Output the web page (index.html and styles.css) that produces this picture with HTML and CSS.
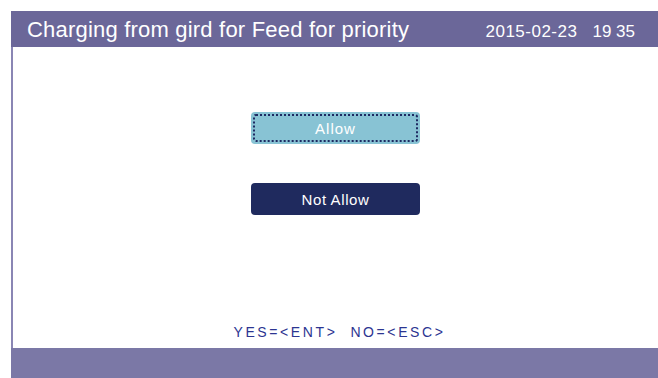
FILE: index.html
```html
<!DOCTYPE html>
<html>
<head>
<meta charset="utf-8">
<link rel="stylesheet" href="styles.css">
</head>
<body>
<div class="screen">
  <header class="header">
    <span class="title">Charging from gird for Feed for priority</span>
    <span class="clock"><span class="date">2015-02-23</span><span class="time">19 35</span></span>
  </header>
  <main class="content">
    <div class="options">
      <div class="btn btn-selected"><span>Allow</span></div>
      <div class="btn btn-dark"><span>Not Allow</span></div>
    </div>
    <div class="hint">YES=&lt;ENT&gt;&nbsp;&nbsp;NO=&lt;ESC&gt;</div>
  </main>
  <footer class="footer"></footer>
</div>
</body>
</html>
```
FILE: styles.css
```css
html, body {
  margin: 0;
  padding: 0;
  background: #ffffff;
  width: 658px;
  height: 378px;
  overflow: hidden;
}
body {
  padding: 11px 0 0 11px;
  box-sizing: border-box;
  font-family: "Liberation Sans", Arial, sans-serif;
}
.screen {
  width: 647px;
  height: 367px;
  display: flex;
  flex-direction: column;
}
.header {
  height: 36px;
  background: #6b6799;
  color: #ffffff;
  display: flex;
  align-items: center;
  padding: 0 0 0 16px;
  flex: none;
}
.title {
  font-size: 22px;
  letter-spacing: 0.2px;
  flex: 1;
  padding-top: 1px;
}
.clock {
  font-size: 17px;
  margin-right: 23px;
  padding-top: 6px;
}
.date {
  letter-spacing: 0.5px;
  margin-right: 15px;
}
.content {
  flex: 1;
  border-left: 2px solid #8a86b4;
  display: flex;
  flex-direction: column;
  align-items: center;
}
.options {
  margin-top: 65px;
  display: flex;
  flex-direction: column;
  gap: 39px;
}
.btn {
  width: 169px;
  height: 32px;
  border-radius: 4px;
  box-sizing: border-box;
  display: flex;
  align-items: center;
  justify-content: center;
  font-size: 15px;
  letter-spacing: 0.6px;
  color: #ffffff;
}
.btn-selected {
  background: #88c3d4;
  padding: 2px;
}
.btn-selected span {
  flex: 1;
  align-self: stretch;
  border: 2px dotted #1e2a62;
  border-radius: 3px;
  display: flex;
  align-items: center;
  justify-content: center;
  letter-spacing: 1px;
}
.btn-dark {
  background: #1f2a5e;
}
.hint {
  margin-top: auto;
  margin-bottom: 8px;
  margin-left: 8px;
  color: #2c3591;
  font-size: 14px;
  letter-spacing: 2.6px;
}
.footer {
  height: 30px;
  background: #7b78a6;
  flex: none;
}
```
